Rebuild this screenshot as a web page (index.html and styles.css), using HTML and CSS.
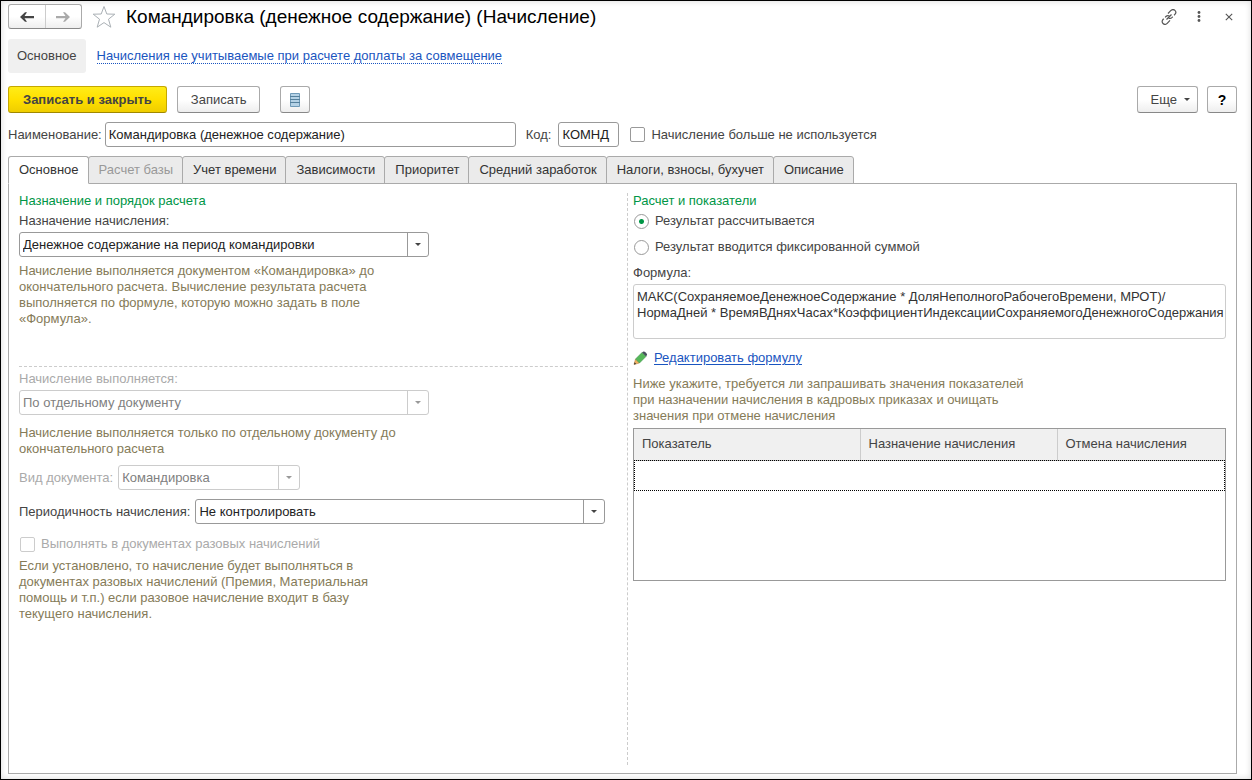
FILE: index.html
```
<!DOCTYPE html>
<html lang="ru">
<head>
<meta charset="utf-8">
<title>Командировка (денежное содержание) (Начисление)</title>
<link rel="stylesheet" href="styles.css">
</head>
<body>
<main class="window">
  <header class="titlebar">
    <div class="history">
      <button class="history-btn" type="button" aria-label="Назад">
        <svg width="14" height="10" viewBox="0 0 14 10"><path d="M0 5L5 .2h2L4.500 4H14v2.200H4.500L7 9.800H5z" fill="#444"/></svg>
      </button>
      <button class="history-btn" type="button" aria-label="Вперед">
        <svg width="14" height="10" viewBox="0 0 14 10"><path d="M14 5L9 .2H7L9.500 4H0v2.200h9.500L7 9.800h2z" fill="#aaa"/></svg>
      </button>
    </div>
    <button class="icon-btn" type="button" aria-label="В избранное">
      <svg width="24" height="24" viewBox="0 0 24 24"><path d="M12 1.500l2.800 7.500 8 .2-6.300 5 2.300 8L12 17.600 5.200 22.200l2.300-8-6.300-5 8-.2z" fill="#fff" stroke="#aab0b5"/></svg>
    </button>
    <h1 class="title">Командировка (денежное содержание) (Начисление)</h1>
    <div class="window-tools">
      <button class="icon-btn" type="button" aria-label="Получить ссылку">
        <svg width="16" height="16" viewBox="1 1 16 16" fill="none" stroke="#555" stroke-width="1.200"><path d="M8 5.500l2.700-2.800c1.300-1.300 3-1.400 4.200-.3s1.100 2.800 0 4l-2.800 3c-1 1-2.400 1.300-3.500.6" stroke-dasharray="14 2"/><path d="M10 12.400l-2.800 2.900c-1.200 1.200-3 1.300-4.200.2s-1.100-2.800 0-4l2.900-3c1-1 2.400-1.200 3.500-.5" stroke-dasharray="14 2"/><path d="M6.500 11.500l5-5"/></svg>
      </button>
      <button class="icon-btn" type="button" aria-label="Меню">
        <svg width="4" height="14" viewBox="0 0 4 14" fill="#555"><circle cx="2" cy="2.500" r="1.400"/><circle cx="2" cy="6.500" r="1.400"/><circle cx="2" cy="10.500" r="1.400"/></svg>
      </button>
      <button class="icon-btn" type="button" aria-label="Закрыть">
        <svg width="8" height="8" viewBox="0 0 8 8"><path d="M.8.8l6.400 6.400M7.200.8L.8 7.200" stroke="#555" stroke-width="1.100"/></svg>
      </button>
    </div>
  </header>

  <nav class="sections">
    <button class="section-current" type="button">Основное</button>
    <a class="section-link" href="#">Начисления не учитываемые при расчете доплаты за совмещение</a>
  </nav>

  <div class="toolbar">
    <button class="btn btn-primary" type="button">Записать и закрыть</button>
    <button class="btn" type="button">Записать</button>
    <button class="btn btn-list" type="button" aria-label="Список">
      <svg width="12" height="16" viewBox="0 0 12 16"><path d="M1.500 1.500h9v13h-9z" fill="#b5d2e6" stroke="#6f9ab8"/><path d="M1 4.500h10M1 7.500h10M1 10.500h10" stroke="#55809c"/></svg>
    </button>
    <button class="btn btn-more" type="button">Еще <span class="caret"></span></button>
    <button class="btn btn-help" type="button">?</button>
  </div>

  <div class="identity">
    <label for="name">Наименование:</label>
    <input class="field field-name" id="name" type="text" value="Командировка (денежное содержание)">
    <label class="code-label" for="code">Код:</label>
    <input class="field field-code" id="code" type="text" value="КОМНД">
    <label class="check"><input type="checkbox">Начисление больше не используется</label>
  </div>

  <div class="tabs" role="tablist">
    <button class="tab tab-active" role="tab" aria-selected="true" type="button">Основное</button>
    <button class="tab" role="tab" type="button" disabled>Расчет базы</button>
    <button class="tab" role="tab" type="button">Учет времени</button>
    <button class="tab" role="tab" type="button">Зависимости</button>
    <button class="tab" role="tab" type="button">Приоритет</button>
    <button class="tab" role="tab" type="button">Средний заработок</button>
    <button class="tab" role="tab" type="button">Налоги, взносы, бухучет</button>
    <button class="tab" role="tab" type="button">Описание</button>
  </div>

  <div class="panel" role="tabpanel">
    <div class="column column-left">
      <section class="purpose">
        <h2 class="heading">Назначение и порядок расчета</h2>
        <label class="label" for="purpose">Назначение начисления:</label>
        <div class="combo combo-wide">
          <select id="purpose"><option>Денежное содержание на период командировки</option></select>
          <span class="combo-arrow"><span class="caret"></span></span>
        </div>
        <p class="hint">Начисление выполняется документом «Командировка» до окончательного расчета. Вычисление результата расчета выполняется по формуле, которую можно задать в поле «Формула».</p>
      </section>
      <section class="execution">
        <label class="label muted" for="mode">Начисление выполняется:</label>
        <div class="combo combo-wide combo-off">
          <select id="mode" disabled><option>По отдельному документу</option></select>
          <span class="combo-arrow"><span class="caret"></span></span>
        </div>
        <p class="hint hint-mode">Начисление выполняется только по отдельному документу до окончательного расчета</p>
        <div class="row">
          <label class="muted" for="doc">Вид документа:</label>
          <div class="combo combo-doc combo-off">
            <select id="doc" disabled><option>Командировка</option></select>
            <span class="combo-arrow"><span class="caret"></span></span>
          </div>
        </div>
        <div class="row">
          <label for="period">Периодичность начисления:</label>
          <div class="combo combo-wide">
            <select id="period"><option>Не контролировать</option></select>
            <span class="combo-arrow"><span class="caret"></span></span>
          </div>
        </div>
        <label class="check check-single muted"><input type="checkbox" disabled>Выполнять в документах разовых начислений</label>
        <p class="hint hint-single">Если установлено, то начисление будет выполняться в документах разовых начислений (Премия, Материальная помощь и т.п.) если разовое начисление входит в базу текущего начисления.</p>
      </section>
    </div>

    <div class="column column-right">
      <h2 class="heading">Расчет и показатели</h2>
      <div class="radios">
        <label class="radio"><input type="radio" name="result" checked>Результат рассчитывается</label>
        <label class="radio"><input type="radio" name="result">Результат вводится фиксированной суммой</label>
      </div>
      <label class="label" for="formula">Формула:</label>
      <textarea class="formula" id="formula" readonly>МАКС(СохраняемоеДенежноеСодержание * ДоляНеполногоРабочегоВремени, МРОТ)/
НормаДней * ВремяВДняхЧасах*КоэффициентИндексацииСохраняемогоДенежногоСодержания</textarea>
      <div class="edit">
        <svg width="15" height="14" viewBox="0 0 14 14"><path d="M.5 13.500L2 8l4 4z" fill="#f0b060" stroke="#b07c3c" stroke-width=".5"/><path d="M.5 13.500l.6-2.200 1.600 1.600z" fill="#333"/><path d="M2 8l6.500-6.500 4 4L6 12z" fill="#55b85a" stroke="#3b8a44" stroke-width=".5"/><path d="M8.500 1.500L10 .5c1-.5 4 2.300 3.500 3.500l-1 1.500z" fill="#45505c"/></svg>
        <a href="#">Редактировать формулу</a>
      </div>
      <p class="hint hint-table">Ниже укажите, требуется ли запрашивать значения показателей при назначении начисления в кадровых приказах и очищать значения при отмене начисления</p>
      <div class="grid">
        <table>
          <thead><tr><th class="col-main">Показатель</th><th class="col-assign">Назначение начисления</th><th>Отмена начисления</th></tr></thead>
          <tbody><tr class="selected"><td colspan="3"></td></tr></tbody>
        </table>
      </div>
    </div>
  </div>
</main>
</body>
</html>
```
FILE: styles.css
```
* {
  box-sizing: border-box;
}

body {
  margin: 0;
  background: #fff;
  color: #444;
  font: 13px/16px "Liberation Sans", Arial, sans-serif;
}

button,
input,
select,
textarea {
  font: inherit;
  color: inherit;
}

h1,
h2,
p {
  margin: 0;
  font-weight: normal;
}

svg {
  display: block;
}

.window {
  display: flex;
  flex-direction: column;
  min-height: 100vh;
  padding: 3px 14px 5px 7px;
  border: 1px solid #000;
  box-shadow: inset 0 0 6px #d8d8d8;
}

/* Title bar */
.titlebar {
  display: flex;
  align-items: center;
  height: 25px;
}

.history {
  display: flex;
  width: 74px;
  height: 25px;
  margin-right: 10px;
  border: 1px solid #aaa;
  border-bottom-color: #888;
  border-radius: 3px;
  background: linear-gradient(#fff 50%, #eee);
}

.history-btn {
  display: flex;
  flex: 1;
  align-items: center;
  justify-content: center;
  padding: 0;
  border: 0;
  background: none;
}

.history-btn + .history-btn {
  border-left: 1px solid #ccc;
}

.icon-btn {
  padding: 0;
  border: 0;
  background: none;
}

.title {
  margin-left: 10px;
  color: #000;
  font-size: 19px;
  line-height: 24px;
}

.window-tools {
  display: flex;
  align-items: center;
  gap: 14px;
  margin-left: auto;
}

.window-tools .icon-btn {
  display: flex;
  justify-content: center;
  width: 16px;
}

/* Section navigation */
.sections {
  display: flex;
  align-items: center;
  gap: 11px;
  margin-top: 10px;
}

.section-current {
  height: 34px;
  padding: 0 9px;
  border: 0;
  border-radius: 3px;
  background: #f0f0f0;
}

.section-link {
  border-bottom: 1px dotted #1a55c0;
  color: #1a55c0;
  line-height: 14px;
  text-decoration: none;
}

/* Toolbar */
.toolbar {
  display: flex;
  margin-top: 13px;
}

.btn {
  height: 27px;
  padding: 0 13px;
  border: 1px solid #aaa;
  border-bottom-color: #888;
  border-radius: 3px;
  background: linear-gradient(#fff 50%, #eee);
}

.btn-primary {
  margin-right: 10px;
  padding: 0 14px;
  border-color: #c5a800;
  border-bottom-color: #a08800;
  background: linear-gradient(#ffec18, #ffe000 50%, #efcd00);
  font-weight: bold;
}

.btn-list {
  margin-left: 20px;
  padding: 0 8px;
}

.btn-more {
  display: flex;
  align-items: center;
  gap: 7px;
  margin-left: auto;
  padding: 0 7px 0 13px;
}

.btn-help {
  width: 30px;
  margin-left: 9px;
  padding: 0;
  color: #000;
  font-size: 14px;
  font-weight: bold;
}

.caret {
  border: 3px solid transparent;
  border-top-color: currentColor;
  border-bottom: 0;
}

/* Name and code */
.identity {
  display: flex;
  align-items: center;
  margin-top: 9px;
}

.field {
  height: 25px;
  padding: 0 3px;
  border: 1px solid #999;
  border-radius: 3px;
  background: #fff;
  color: #222;
}

.field-name {
  width: 411px;
  margin-left: 3px;
}

.code-label {
  margin-left: 10px;
}

.field-code {
  width: 61px;
  margin-left: 7px;
}

.check,
.radio {
  display: flex;
  align-items: center;
  gap: 6px;
}

.identity .check {
  margin-left: 11px;
}

.check input,
.radio input {
  width: 15px;
  height: 15px;
  margin: 0;
  border: 1px solid #999;
  border-radius: 2px;
  background: #fff;
  appearance: none;
}

.check input:disabled {
  border-color: #ccc;
}

.radio input {
  border-radius: 50%;
}

.radio input:checked {
  background: radial-gradient(circle, #009646 2px, #fff 3px);
}

/* Tabs */
.tabs {
  display: flex;
  margin-top: 9px;
}

.tab {
  height: 28px;
  margin-left: -1px;
  padding: 0 9px 0 10px;
  border: 1px solid #aaa;
  border-radius: 3px 3px 0 0;
  background: #ebebeb;
  color: #333;
}

.tab:disabled {
  color: #999;
}

.tab-active {
  position: relative;
  margin-left: 0;
  border-bottom-color: #fff;
  background: #fff;
}

.panel {
  display: grid;
  flex: 1;
  grid-template-columns: minmax(0, 609fr) minmax(0, 598fr);
  margin-top: -1px;
  padding: 9px 10px 8px;
  border: 1px solid #aaa;
}

.column-left {
  border-right: 1px dashed #ccc;
}

.column-right {
  padding-left: 5px;
}

.heading {
  color: #009646;
  font-size: 13px;
}

.label {
  display: block;
  margin: 4px 0 3px;
}

.muted {
  color: #aaa;
}

.hint {
  max-width: 380px;
  margin-top: 6px;
  color: #857b58;
}

.purpose {
  min-height: 174px;
  margin-right: 4px;
  border-bottom: 1px dashed #ccc;
}

.purpose .hint,
.hint-single {
  max-width: 360px;
}

.combo {
  display: flex;
  height: 25px;
  border: 1px solid #999;
  border-radius: 3px;
  background: #fff;
  color: #222;
}

.combo select {
  flex: 1;
  min-width: 0;
  padding: 0 3px;
  border: 0;
  background: none;
  appearance: none;
  opacity: 1;
}

.combo-arrow {
  display: flex;
  align-items: center;
  justify-content: center;
  width: 21px;
  border-left: 1px solid #999;
  color: #444;
}

.combo-off {
  color: #808080;
}

.combo-off,
.combo-off .combo-arrow {
  border-color: #ccc;
}

.combo-off .caret {
  color: #999;
}

.combo-wide {
  width: 410px;
}

.combo-doc {
  width: 182px;
}

.hint-mode {
  margin-top: 10px;
}

.row {
  display: flex;
  align-items: center;
  gap: 5px;
  margin-top: 8px;
}

.row + .row {
  margin-top: 9px;
}

.check-single {
  margin: 12px 0 0 1px;
}

/* Calculation */
.radios {
  display: grid;
  gap: 10px;
  margin: 4px 0 10px 1px;
}

.formula {
  display: block;
  width: 100%;
  height: 55px;
  padding: 4px 0 4px 3px;
  border: 1px solid #ccc;
  border-radius: 3px;
  color: #333;
  overflow: hidden;
  resize: none;
  white-space: pre;
}

.edit {
  display: flex;
  align-items: center;
  gap: 6px;
  margin: 11px 0 10px;
}

.edit a {
  color: #1a55c0;
  text-underline-offset: 2px;
}

.hint-table {
  max-width: 400px;
}

.grid {
  min-height: 153px;
  margin-top: 4px;
  border: 1px solid #999;
}

.grid table {
  width: 100%;
  border-collapse: collapse;
  table-layout: fixed;
}

.grid th {
  height: 31px;
  padding: 0 8px;
  border-bottom: 1px solid #bbb;
  background: #f0f0f0;
  font-weight: normal;
  text-align: left;
}

.grid th + th {
  border-left: 1px solid #ccc;
}

.grid .col-main {
  width: 226px;
}

.grid .col-assign {
  width: 197px;
}

.selected td {
  height: 31px;
  padding: 0;
  outline: 1px dotted #000;
  outline-offset: -1px;
}
```
